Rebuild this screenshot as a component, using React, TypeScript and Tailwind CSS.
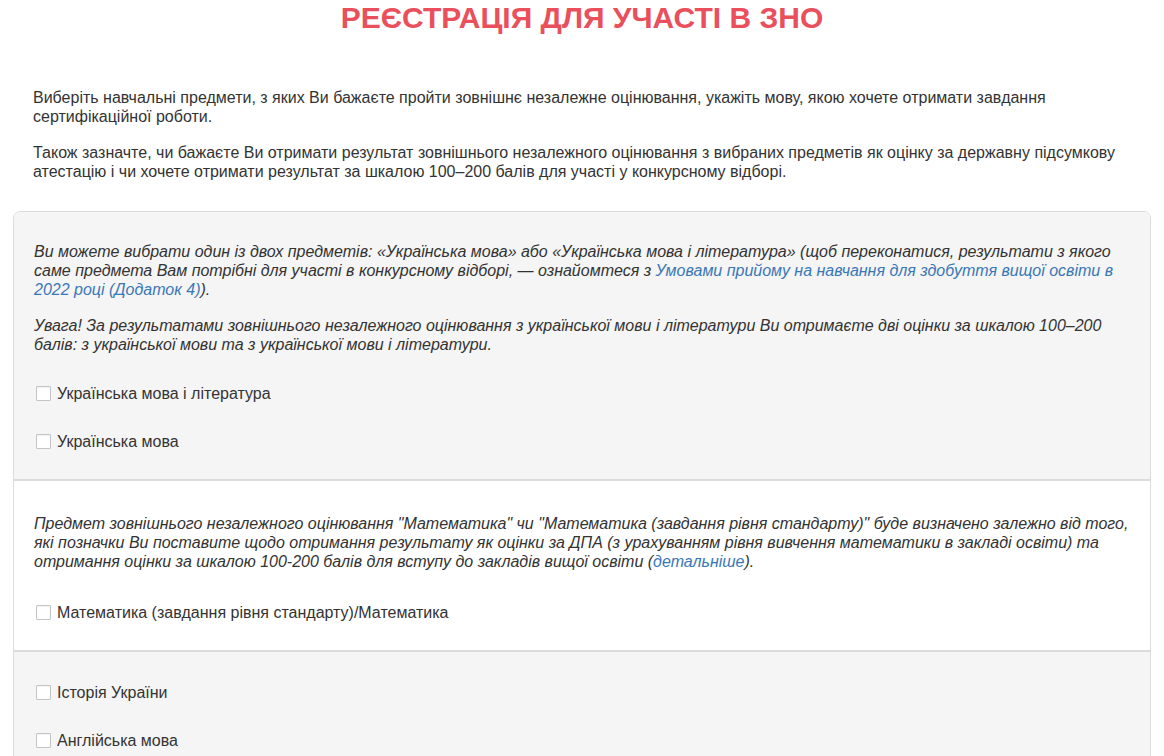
import React from "react";

const Check = ({ label }: { label: string }) => (
  <label className="flex items-center h-[20px] text-[16px] text-[#333]">
    <span className="inline-block w-[15px] h-[15px] border border-[#c4c4c4] bg-white rounded-[1px] ml-[2px] mr-[6px] shadow-[inset_0_1px_1px_rgba(0,0,0,0.05)]" />
    {label}
  </label>
);

export default function App() {
  return (
    <div className="bg-white min-h-screen px-[13px] text-[#333] text-[16px] leading-[19.4px]" style={{ fontFamily: '"Liberation Sans", Arial, sans-serif' }}>
      <h1 className="text-center text-[#ea4f5c] font-bold text-[30px] leading-[36px] pt-[0px]">
        РЕЄСТРАЦІЯ ДЛЯ УЧАСТІ В ЗНО
      </h1>
      <div className="px-[20px] pt-[52px]">
        <p>
          Виберіть навчальні предмети, з яких Ви бажаєте пройти зовнішнє незалежне оцінювання, укажіть мову, якою хочете отримати завдання сертифікаційної роботи.
        </p>
        <p className="mt-[16px]">
          Також зазначте, чи бажаєте Ви отримати результат зовнішнього незалежного оцінювання з вибраних предметів як оцінку за державну підсумкову атестацію і чи хочете отримати результат за шкалою 100–200 балів для участі у конкурсному відборі.
        </p>
      </div>
      <div className="mt-[29px] border border-[#dcdcdc] rounded-t-[7px] overflow-hidden">
        <div className="bg-[#f5f5f5] px-[20px] pt-[30px] pb-[27px] border-b-2 border-[#dcdcdc]">
          <p className="italic">
            Ви можете вибрати один із двох предметів: «Українська мова» або «Українська мова і література» (щоб переконатися, результати з якого саме предмета Вам потрібні для участі в конкурсному відборі, — ознайомтеся з{" "}
            <a className="text-[#3a77b7]">Умовами прийому на навчання для здобуття вищої освіти в 2022 році (Додаток 4)</a>).
          </p>
          <p className="italic mt-[16px]">
            Увага! За результатами зовнішнього незалежного оцінювання з української мови і літератури Ви отримаєте дві оцінки за шкалою 100–200 балів: з української мови та з української мови і літератури.
          </p>
          <div className="mt-[29px] flex flex-col gap-[28px]">
            <Check label="Українська мова і література" />
            <Check label="Українська мова" />
          </div>
        </div>
        <div className="bg-white px-[20px] pt-[33px] pb-[27px] border-b-2 border-[#dcdcdc]">
          <p className="italic">
            Предмет зовнішнього незалежного оцінювання "Математика" чи "Математика (завдання рівня стандарту)" буде визначено залежно від того, які позначки Ви поставите щодо отримання результату як оцінки за ДПА (з урахуванням рівня вивчення математики в закладі освіти) та отримання оцінки за шкалою 100-200 балів для вступу до закладів вищої освіти (<a className="text-[#3a77b7]">детальніше</a>).
          </p>
          <div className="mt-[31px] flex flex-col gap-[28px]">
            <Check label="Математика (завдання рівня стандарту)/Математика" />
          </div>
        </div>
        <div className="bg-[#f5f5f5] px-[20px] pt-[31px] pb-[29px]">
          <div className="flex flex-col gap-[28px]">
            <Check label="Історія України" />
            <Check label="Англійська мова" />
            <Check label="Німецька мова" />
          </div>
        </div>
      </div>
    </div>
  );
}
